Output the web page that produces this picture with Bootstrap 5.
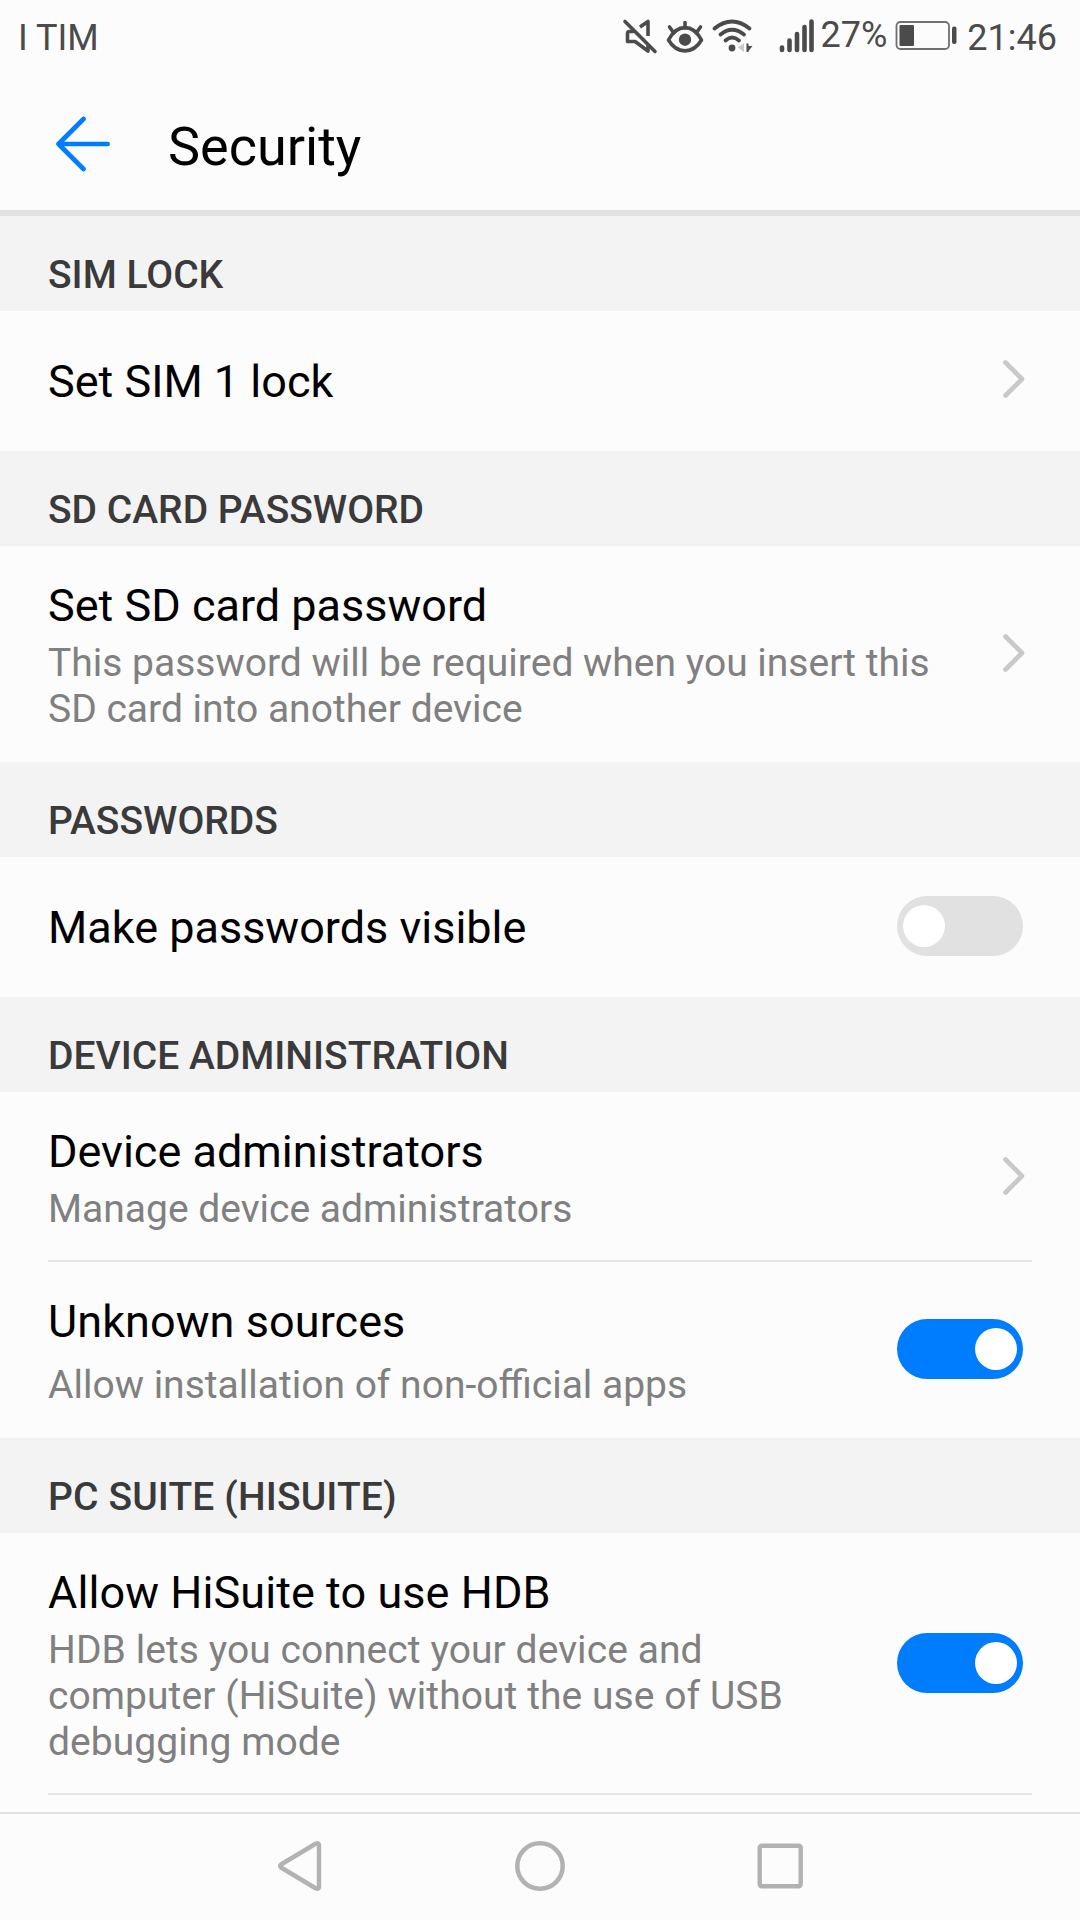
<!DOCTYPE html>
<html lang="en">
<head>
<meta charset="utf-8">
<meta name="viewport" content="width=device-width, initial-scale=1">
<title>Security</title>
<link href="https://cdn.jsdelivr.net/npm/bootstrap@5.3.0/dist/css/bootstrap.min.css" rel="stylesheet">
<style>
  body { font-family: Roboto, "Noto Sans", sans-serif; background: #fcfcfc; color: #000; }
  .screen { width: 1080px; height: 1920px; }
  .status-bar { height: 73px; padding: 17px 23px 0 18px; font-size: 36px; line-height: 42px; color: #4b4b4b; }
  .status-bar svg { margin-top: -17px; }
  .battery-text { margin: -3px 7px 0 1px; }
  .clock { margin-left: 9px; }
  .title-bar { height: 143px; padding: 42px 0 0 54px; border-bottom: 6px solid #e1e1e1; }
  .title-bar h1 { font-size: 54px; line-height: 63px; font-weight: 400; margin-left: 56px; }
  .back-arrow { margin-top: 1px; }
  .section-head { height: 95px; padding: 36px 48px 0; background: #f3f3f3; color: #3a3a3a; font-size: 39px; line-height: 46px; font-weight: 500; }
  .setting { padding: 33px 57px 30px 48px; }
  .setting-single { padding-top: 44px; padding-bottom: 43px; }
  .setting-lined { padding-bottom: 28px; }
  .setting-title { font-size: 45px; line-height: 53px; }
  .setting-note { font-size: 39px; line-height: 46px; color: #808080; margin-top: 8px; }
  .note-loose { margin-top: 14px; }
  .tracked { letter-spacing: .07px; }
  .section-head.tracked { letter-spacing: .13px; }
  .rule { height: 2px; margin: 0 48px; background: #e5e5e5; }
  .chevron { margin: 0 -3px 5px 0; }
  .toggle { width: 126px; height: 60px; padding: 0 6px; margin: -20px 0 -15px; background: #e1e1e1; }
  .setting-single .toggle { margin-bottom: -17px; }
  .toggle.on { background: #007dff; }
  .knob { width: 42px; height: 42px; background: #fff; }
  .nav-keys { height: 108px; border-top: 2px solid #e1e1e1; padding: 25px 275px 0; }
</style>
</head>
<body>
<div class="screen d-flex flex-column overflow-hidden">
  <div class="status-bar d-flex flex-shrink-0">
    <span class="me-auto">I TIM</span>
    <svg width="200" height="60" viewBox="620 0 200 60" fill="none" stroke="#4b4b4b" stroke-linecap="round">
      <g stroke-width="3.6" stroke-linejoin="round">
        <path d="M625 21.500 655 51.500"/>
        <path d="M633 31.500H629.500Q627.500 31.500 627.500 33.500V41.500H635L648 51V46" />
        <path d="M640 27 648 21.500V36" stroke-linecap="butt"/>
      </g>
      <g stroke-width="3.600">
        <path d="M668.500 40C677 23.500 693 23.500 701.500 40C693 54.500 677 54.500 668.500 40Z" stroke-linejoin="round"/>
        <path d="M685 22.500V28M669.500 27 673.500 32.500M700.500 27 696.500 32.500"/>
        <circle cx="685" cy="39.700" r="6.200" fill="#4b4b4b" stroke="none"/>
      </g>
      <g stroke-width="3.800">
        <path d="M714.500 28.500Q732 14.500 749.500 28.500M720.500 34.500Q732 25 744 34.500M725.500 40.500Q732 34.500 739 40.500"/>
        <circle cx="732" cy="48" r="3.400" fill="#4b4b4b" stroke="none"/>
      </g>
      <path d="M738 47.500 744 43V52Z" fill="#c9c9c9" stroke="none"/>
      <path d="M746.500 43 748.500 44V46H752.500L748.500 51V52H746.500Z" fill="#4b4b4b" stroke="none"/>
      <path d="M782 47.500V50M789.500 40.500V50M797 34V50M804.500 27V50M811.500 21.500V50" stroke-width="4.600"/>
    </svg>
    <span class="battery-text">27%</span>
    <svg width="64" height="60" viewBox="894 0 64 60">
      <rect x="896.500" y="22" width="52.500" height="27" rx="4" fill="none" stroke="#707070" stroke-width="1.800"/>
      <rect x="899.500" y="25" width="14.500" height="21" rx="1" fill="#4b4b4b"/>
      <rect x="952" y="26.500" width="4.500" height="17.500" rx="2" fill="#4b4b4b"/>
    </svg>
    <span class="clock">21:46</span>
  </div>

  <header class="title-bar d-flex flex-shrink-0">
    <svg class="back-arrow flex-shrink-0" width="58" height="56" viewBox="54 116 58 56" fill="none" stroke="#007dff" stroke-width="4.600" stroke-linecap="round" stroke-linejoin="round">
      <path d="M83.500 119 58.500 144 83.500 169M58.500 144H107.700"/>
    </svg>
    <h1 class="mb-0">Security</h1>
  </header>

  <main class="flex-grow-1">
    <div class="section-head">SIM LOCK</div>
    <div class="setting setting-single d-flex align-items-center justify-content-between">
      <div class="setting-title">Set SIM 1 lock</div>
      <svg class="chevron flex-shrink-0" width="24" height="40" fill="none" stroke="#c9c9c9" stroke-width="4.600" stroke-linecap="round" stroke-linejoin="round"><path d="M3.500 3.500 20 20 3.500 36.500"/></svg>
    </div>

    <div class="section-head">SD CARD PASSWORD</div>
    <div class="setting d-flex align-items-center justify-content-between">
      <div>
        <div class="setting-title">Set SD card password</div>
        <div class="setting-note">This password will be required when you insert this<br>SD card into another device</div>
      </div>
      <svg class="chevron flex-shrink-0" width="24" height="40" fill="none" stroke="#c9c9c9" stroke-width="4.600" stroke-linecap="round" stroke-linejoin="round"><path d="M3.500 3.500 20 20 3.500 36.500"/></svg>
    </div>

    <div class="section-head">PASSWORDS</div>
    <div class="setting setting-single d-flex align-items-center justify-content-between">
      <div class="setting-title">Make passwords visible</div>
      <div class="toggle rounded-pill d-flex align-items-center" role="switch" aria-checked="false"><span class="knob rounded-circle"></span></div>
    </div>

    <div class="section-head">DEVICE ADMINISTRATION</div>
    <div class="setting setting-lined d-flex align-items-center justify-content-between">
      <div>
        <div class="setting-title">Device administrators</div>
        <div class="setting-note">Manage device administrators</div>
      </div>
      <svg class="chevron flex-shrink-0" width="24" height="40" fill="none" stroke="#c9c9c9" stroke-width="4.600" stroke-linecap="round" stroke-linejoin="round"><path d="M3.500 3.500 20 20 3.500 36.500"/></svg>
    </div>
    <div class="rule"></div>
    <div class="setting d-flex align-items-center justify-content-between">
      <div>
        <div class="setting-title tracked">Unknown sources</div>
        <div class="setting-note note-loose">Allow installation of non-official apps</div>
      </div>
      <div class="toggle on rounded-pill d-flex align-items-center justify-content-end" role="switch" aria-checked="true"><span class="knob rounded-circle"></span></div>
    </div>

    <div class="section-head tracked">PC SUITE (HISUITE)</div>
    <div class="setting setting-lined d-flex align-items-center justify-content-between">
      <div>
        <div class="setting-title tracked">Allow HiSuite to use HDB</div>
        <div class="setting-note tracked">HDB lets you connect your device and<br>computer (HiSuite) without the use of USB<br>debugging mode</div>
      </div>
      <div class="toggle on rounded-pill d-flex align-items-center justify-content-end" role="switch" aria-checked="true"><span class="knob rounded-circle"></span></div>
    </div>
    <div class="rule"></div>
  </main>

  <nav class="nav-keys d-flex justify-content-between align-items-start flex-shrink-0">
    <svg width="50" height="54" viewBox="275 1839 50 54" fill="none" stroke="#b2b2b2" stroke-width="4.400" stroke-linejoin="round"><path d="M316 1843.500Q319 1842.500 319 1845V1887Q319 1889.500 316 1888.500L281 1867.500Q279.500 1866 281 1864.500Z"/></svg>
    <svg width="54" height="54" viewBox="513 1839 54 54" fill="none" stroke="#b2b2b2" stroke-width="4.500"><circle cx="540" cy="1866" r="22.700"/></svg>
    <svg width="50" height="54" viewBox="755 1839 50 54" fill="none" stroke="#b2b2b2" stroke-width="4.400"><rect x="759.700" y="1845.700" width="41" height="40.500" rx="2"/></svg>
  </nav>
</div>
<script src="https://cdn.jsdelivr.net/npm/bootstrap@5.3.0/dist/js/bootstrap.bundle.min.js"></script>
</body>
</html>
